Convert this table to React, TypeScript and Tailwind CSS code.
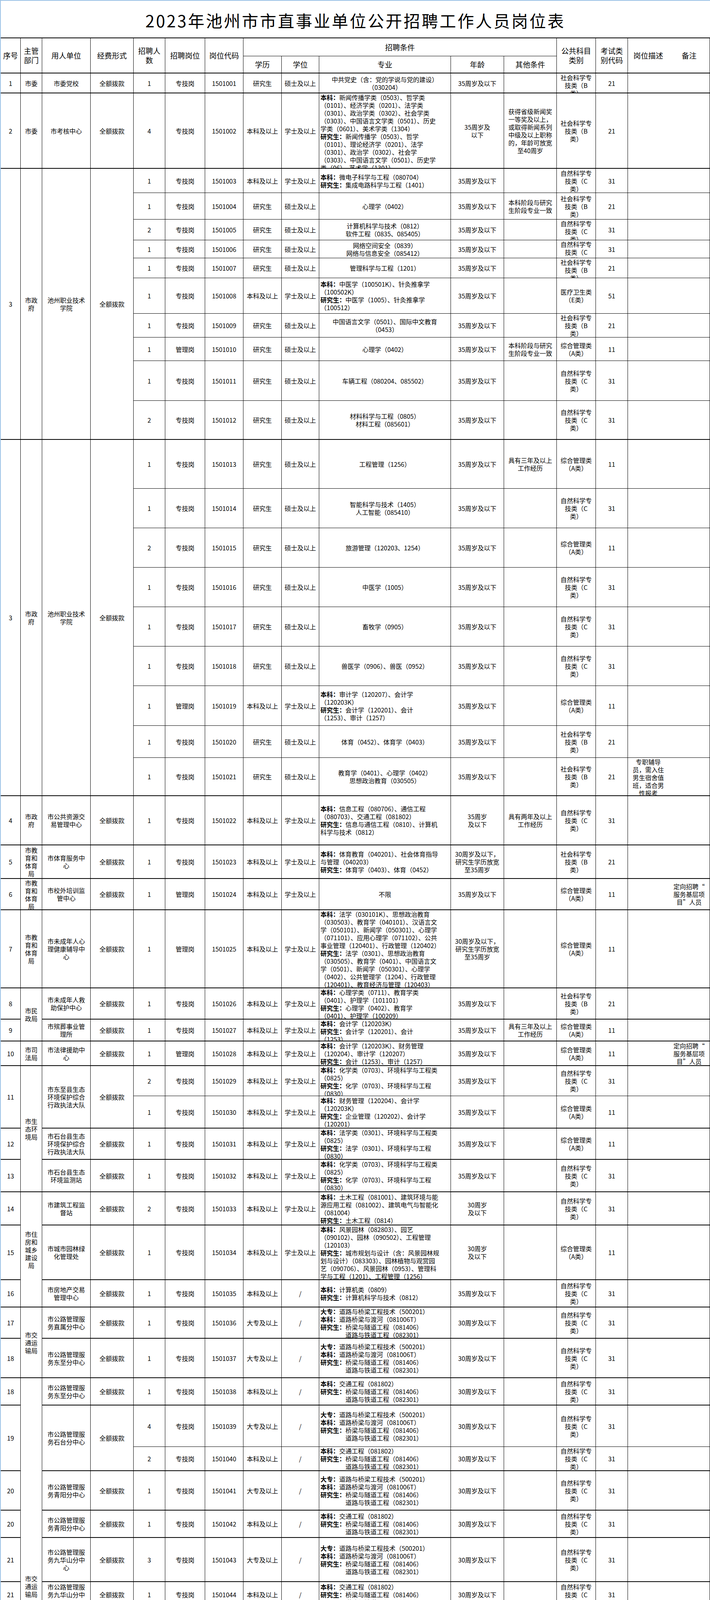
import React from 'react';

const Y = [188,239,432,494,562,615,661,712,803,864,924,1026,1126,1251,1352,1453,1554,1655,1756,1858,1940,2038,2164,2250,2330,2530,2610,2666,2729,2806,2889,2969,3052,3137,3277,3347,3427,3528,3598,3704,3766,3867,3937,4050,4116,4217,4322,4393,4443,4519,4595,4764,4895,5045,5153,5254,5320,5440,5536,5622,5725,5786,5881,5939,6022,6134,6195,6286,6367,6493,6554,6605];

const Z = '专技岗', G = '管理岗', BK = '本科及以上', YJ = '研究生', SS = '硕士及以上', XS = '学士及以上', DZ = '大专及以上', ZK = '专科及以上', SL = '/';
const A35 = '35周岁及以下', A30 = '30周岁及以下';
const CA = '综合管理类\n（A类）', CB = '社会科学专\n技类（B\n类）', CC = '自然科学专\n技类（C\n类）', CE = '医疗卫生类\n（E类）';
const QE = '全额拨款';
const ZF = '市政\n府';
const ZYJ = '池州职业技术\n学院';
const JT = '市交\n通运\n输局';
const JYT = '市教\n育和\n体育\n局';
const DX = '定向招聘“\n服务基层项\n目”人员';
const JS = '定向招聘驻\n池部队随军\n家属';
const SM = '40周岁及以下，\n符合池招\n（2019）16号文\n件规定的特殊情\n况，年龄放宽至\n45周岁';
const HAI = '市地方海事\n（港航）管理\n';

const DQ = ['大专：道路与桥梁工程技术（500201）', '本科：道路桥梁与渡河（081006T）', '研究生：桥梁与隧道工程（081406）', '^道路与铁道工程（082301）'];
const BQ = ['本科：交通工程（081802）', '研究生：桥梁与隧道工程（081406）', '^道路与铁道工程（082301）'];

type Row = {
  xu?: [string, number];
  dept?: [string, number];
  unit?: [string, number];
  fund?: [string, number];
  n: string; p: string; code: string; e: string; d: string;
  m: string[]; mc?: boolean;
  a: string; o?: string; cat: string; cc: string; desc?: string; note?: string; noteL?: boolean;
};

const rows: Row[] = [
  { xu: ['1', 1], dept: ['市委', 1], unit: ['市委党校', 1], fund: [QE, 1], n: '1', p: Z, code: '1501001', e: YJ, d: SS, m: ['中共党史（含：党的学说与党的建设）', '（030204）'], mc: true, a: A35, cat: CB, cc: '21' },
  { xu: ['2', 1], dept: ['市委', 1], unit: ['市考核中心', 1], fund: [QE, 1], n: '4', p: Z, code: '1501002', e: BK, d: XS, m: ['本科：新闻传播学类（0503）、哲学类', '（0101）、经济学类（0201）、法学类', '（0301）、政治学类（0302）、社会学类', '（0303）、中国语言文学类（0501）、历史', '学类（0601）、美术学类（1304）', '研究生：新闻传播学（0503）、哲学', '（0101）、理论经济学（0201）、法学', '（0301）、政治学（0302）、社会学', '（0303）、中国语言文学（0501）、历史学', '类（06）、艺术学（1301）'], a: '35周岁及\n以下', o: '获得省级新闻奖\n一等奖及以上，\n或取得新闻系列\n中级及以上职称\n的，年龄可放宽\n至40周岁', cat: CB, cc: '21' },
  { xu: ['3', 10], dept: [ZF, 10], unit: [ZYJ, 10], fund: [QE, 10], n: '1', p: Z, code: '1501003', e: BK, d: XS, m: ['本科：微电子科学与工程（080704）', '研究生：集成电路科学与工程（1401）'], a: A35, cat: CC, cc: '31' },
  { n: '1', p: Z, code: '1501004', e: YJ, d: SS, m: ['心理学（0402）'], mc: true, a: A35, o: '本科阶段与研究\n生阶段专业一致', cat: CB, cc: '21' },
  { n: '2', p: Z, code: '1501005', e: YJ, d: SS, m: ['计算机科学与技术（0812）', '软件工程（0835、085405）'], mc: true, a: A35, cat: CC, cc: '31' },
  { n: '1', p: Z, code: '1501006', e: YJ, d: SS, m: ['网络空间安全（0839）', '网络与信息安全（085412）'], mc: true, a: A35, cat: CC, cc: '31' },
  { n: '1', p: Z, code: '1501007', e: YJ, d: SS, m: ['管理科学与工程（1201）'], mc: true, a: A35, cat: CB, cc: '21' },
  { n: '1', p: Z, code: '1501008', e: BK, d: XS, m: ['本科：中医学（100501K）、针灸推拿学', '（100502K）', '研究生：中医学（1005）、针灸推拿学', '（100512）'], a: A35, cat: CE, cc: '51' },
  { n: '1', p: Z, code: '1501009', e: YJ, d: SS, m: ['中国语言文学（0501）、国际中文教育', '（0453）'], mc: true, a: A35, cat: CB, cc: '21' },
  { n: '1', p: G, code: '1501010', e: YJ, d: SS, m: ['心理学（0402）'], mc: true, a: A35, o: '本科阶段与研究\n生阶段专业一致', cat: CA, cc: '11' },
  { n: '1', p: Z, code: '1501011', e: YJ, d: SS, m: ['车辆工程（080204、085502）'], mc: true, a: A35, cat: CC, cc: '31' },
  { n: '2', p: Z, code: '1501012', e: YJ, d: SS, m: ['材料科学与工程（0805）', '材料工程（085601）'], mc: true, a: A35, cat: CC, cc: '31' },
  { xu: ['3', 9], dept: [ZF, 9], unit: [ZYJ, 9], fund: [QE, 9], n: '1', p: Z, code: '1501013', e: YJ, d: SS, m: ['工程管理（1256）'], mc: true, a: A35, o: '具有三年及以上\n工作经历', cat: CA, cc: '11' },
  { n: '1', p: Z, code: '1501014', e: YJ, d: SS, m: ['智能科学与技术（1405）', '人工智能（085410）'], mc: true, a: A35, cat: CC, cc: '31' },
  { n: '2', p: Z, code: '1501015', e: YJ, d: SS, m: ['旅游管理（120203、1254）'], mc: true, a: A35, cat: CA, cc: '11' },
  { n: '1', p: Z, code: '1501016', e: YJ, d: SS, m: ['中医学（1005）'], mc: true, a: A35, cat: CC, cc: '31' },
  { n: '1', p: Z, code: '1501017', e: YJ, d: SS, m: ['畜牧学（0905）'], mc: true, a: A35, cat: CC, cc: '31' },
  { n: '1', p: Z, code: '1501018', e: YJ, d: SS, m: ['兽医学（0906）、兽医（0952）'], mc: true, a: A35, cat: CC, cc: '31' },
  { n: '1', p: G, code: '1501019', e: BK, d: XS, m: ['本科：审计学（120207）、会计学', '（120203K）', '研究生：会计学（120201）、会计', '（1253）、审计（1257）'], a: A35, cat: CA, cc: '11' },
  { n: '1', p: Z, code: '1501020', e: YJ, d: SS, m: ['体育（0452）、体育学（0403）'], mc: true, a: A35, cat: CB, cc: '21' },
  { n: '1', p: Z, code: '1501021', e: YJ, d: SS, m: ['教育学（0401）、心理学（0402）', '思想政治教育（030505）'], mc: true, a: A35, cat: CB, cc: '21', desc: '专职辅导\n员，需入住\n男生宿舍值\n班，适合男\n性报考' },
  { xu: ['4', 1], dept: [ZF, 1], unit: ['市公共资源交\n易管理中心', 1], fund: [QE, 1], n: '1', p: Z, code: '1501022', e: BK, d: XS, m: ['本科：信息工程（080706）、通信工程', '（080703）、交通工程（081802）', '研究生：信息与通信工程（0810）、计算机', '科学与技术（0812）'], a: '35周岁\n及以下', o: '具有两年及以上\n工作经历', cat: CC, cc: '31' },
  { xu: ['5', 1], dept: [JYT, 1], unit: ['市体育服务中\n心', 1], fund: [QE, 1], n: '1', p: Z, code: '1501023', e: BK, d: XS, m: ['本科：体育教育（040201）、社会体育指导', '与管理（040203）', '研究生：体育学（0403）、体育（0452）'], a: '30周岁及以下，\n研究生学历放宽\n至35周岁', cat: CB, cc: '21' },
  { xu: ['6', 1], dept: [JYT, 1], unit: ['市校外培训监\n管中心', 1], fund: [QE, 1], n: '1', p: G, code: '1501024', e: BK, d: XS, m: ['不限'], mc: true, a: A35, cat: CA, cc: '11', note: DX },
  { xu: ['7', 1], dept: [JYT, 1], unit: ['市未成年人心\n理健康辅导中\n心', 1], fund: [QE, 1], n: '1', p: G, code: '1501025', e: BK, d: XS, m: ['本科：法学（030101K）、思想政治教育', '（030503）、教育学（040101）、汉语言文', '学（050101）、新闻学（050301）、心理学', '（071101）、应用心理学（071102）、公共', '事业管理（120401）、行政管理（120402）', '研究生：法学（0301）、思想政治教育', '（030505）、教育学（0401）、中国语言文', '学（0501）、新闻学（050301）、心理学', '（0402）、公共管理学（1204）、行政管理', '（120401）、教育经济与管理（120403）'], a: '30周岁及以下，\n研究生学历放宽\n至35周岁', cat: CA, cc: '11' },
  { xu: ['8', 1], dept: ['市民\n政局', 2], unit: ['市未成年人救\n助保护中心', 1], fund: [QE, 1], n: '1', p: Z, code: '1501026', e: BK, d: XS, m: ['本科：心理学类（0711）、教育学类', '（0401）、护理学（101101）', '研究生：心理学（0402）、教育学', '（0401）、护理学（100209）'], a: A35, cat: CB, cc: '21' },
  { xu: ['9', 1], unit: ['市殡葬事业管\n理所', 1], fund: [QE, 1], n: '1', p: Z, code: '1501027', e: BK, d: XS, m: ['本科：会计学（120203K）', '研究生：会计学（120201）、会计', '（1253）'], a: A35, o: '具有三年及以上\n工作经历', cat: CA, cc: '11' },
  { xu: ['10', 1], dept: ['市司\n法局', 1], unit: ['市法律援助中\n心', 1], fund: [QE, 1], n: '1', p: G, code: '1501028', e: BK, d: XS, m: ['本科：会计学（120203K）、财务管理', '（120204）、审计学（120207）', '研究生：会计（1253）、审计（1257）'], a: A35, cat: CA, cc: '11', note: DX },
  { xu: ['11', 2], dept: ['市生\n态环\n境局', 4], unit: ['市东至县生态\n环境保护综合\n行政执法大队', 2], fund: [QE, 2], n: '2', p: Z, code: '1501029', e: BK, d: XS, m: ['本科：化学类（0703）、环境科学与工程类', '（0825）', '研究生：化学（0703）、环境科学与工程', '（0830）'], a: A35, cat: CC, cc: '31' },
  { n: '1', p: Z, code: '1501030', e: BK, d: XS, m: ['本科：财务管理（120204）、会计学', '（120203K）', '研究生：企业管理（120202）、会计学', '（120201）'], a: A35, cat: CA, cc: '11' },
  { xu: ['12', 1], unit: ['市石台县生态\n环境保护综合\n行政执法大队', 1], fund: [QE, 1], n: '1', p: Z, code: '1501031', e: BK, d: XS, m: ['本科：法学类（0301）、环境科学与工程类', '（0825）', '研究生：法学（0301）、环境科学与工程', '（0830）'], a: A35, cat: CA, cc: '11' },
  { xu: ['13', 1], unit: ['市石台县生态\n环境监测站', 1], fund: [QE, 1], n: '1', p: Z, code: '1501032', e: BK, d: XS, m: ['本科：化学类（0703）、环境科学与工程类', '（0825）', '研究生：化学（0703）、环境科学与工程', '（0830）'], a: A35, cat: CC, cc: '31' },
  { xu: ['14', 1], dept: ['市住\n房和\n城乡\n建设\n局', 3], unit: ['市建筑工程监\n督站', 1], fund: [QE, 1], n: '2', p: Z, code: '1501033', e: BK, d: XS, m: ['本科：土木工程（081001）、建筑环境与能', '源应用工程（081002）、建筑电气与智能化', '（081004）', '研究生：土木工程（0814）'], a: '30周岁\n及以下', cat: CC, cc: '31' },
  { xu: ['15', 1], unit: ['市城市园林绿\n化管理处', 1], fund: [QE, 1], n: '1', p: Z, code: '1501034', e: BK, d: XS, m: ['本科：风景园林（082803）、园艺', '（090102）、园林（090502）、工程管理', '（120103）', '研究生：城市规划与设计（含：风景园林规', '划与设计）（083303）、园林植物与观赏园', '艺（090706）、风景园林（0953）、管理科', '学与工程（1201）、工程管理（1256）'], a: '30周岁\n及以下', cat: CA, cc: '11' },
  { xu: ['16', 1], unit: ['市房地产交易\n管理中心', 1], fund: [QE, 1], n: '1', p: Z, code: '1501035', e: BK, d: SL, m: ['本科：计算机类（0809）', '研究生：计算机科学与技术（0812）'], a: A35, cat: CC, cc: '31' },
  { xu: ['17', 1], dept: [JT, 2], unit: ['市公路管理服\n务直属分中心', 1], fund: [QE, 1], n: '1', p: Z, code: '1501036', e: DZ, d: SL, m: DQ, a: A30, cat: CC, cc: '31' },
  { xu: ['18', 1], unit: ['市公路管理服\n务东至分中心', 1], fund: [QE, 1], n: '1', p: Z, code: '1501037', e: DZ, d: SL, m: DQ, a: A30, cat: CC, cc: '31' },
  { xu: ['18', 1], dept: [JT, 13], unit: ['市公路管理服\n务东至分中心', 1], fund: [QE, 1], n: '1', p: Z, code: '1501038', e: BK, d: SL, m: BQ, a: A30, cat: CC, cc: '31' },
  { xu: ['19', 2], unit: ['市公路管理服\n务石台分中心', 2], fund: [QE, 2], n: '4', p: Z, code: '1501039', e: DZ, d: SL, m: DQ, a: A30, cat: CC, cc: '31' },
  { n: '2', p: Z, code: '1501040', e: BK, d: SL, m: BQ, a: A30, cat: CC, cc: '31' },
  { xu: ['20', 1], unit: ['市公路管理服\n务青阳分中心', 1], fund: [QE, 1], n: '1', p: Z, code: '1501041', e: DZ, d: SL, m: DQ, a: A30, cat: CC, cc: '31' },
  { xu: ['20', 1], unit: ['市公路管理服\n务青阳分中心', 1], fund: [QE, 1], n: '1', p: Z, code: '1501042', e: BK, d: SL, m: BQ, a: A30, cat: CC, cc: '31' },
  { xu: ['21', 1], unit: ['市公路管理服\n务九华山分中\n心', 1], fund: [QE, 1], n: '3', p: Z, code: '1501043', e: DZ, d: SL, m: DQ, a: A30, cat: CC, cc: '31' },
  { xu: ['21', 1], unit: ['市公路管理服\n务九华山分中\n心', 1], fund: [QE, 1], n: '1', p: Z, code: '1501044', e: BK, d: SL, m: BQ, a: A30, cat: CC, cc: '31' },
  { xu: ['22', 6], unit: ['市道路运输管\n理服务中心', 6], fund: [QE, 6], n: '1', p: Z, code: '1501045', e: BK, d: XS, m: ['本科：会计学（120203K）、财务管理', '（120204）、审计学（120207）、财政学', '（020201K）', '研究生：会计学（120201）、会计', '（1253）、审计（1257）、财政学'], a: A35, cat: CA, cc: '11' },
  { n: '2', p: Z, code: '1501046', e: BK, d: XS, m: ['本科：交通运输（081801）、交通工程', '（081802）、机械电子工程（080204）', '研究生：交通运输（0861）、交通信息工', '程及控制（082302）'], a: A35, cat: CC, cc: '31' },
  { n: '2', p: G, code: '1501047', e: BK, d: XS, m: ['本科：交通管理（120407T）交通设备与控', '制工程（081806T）城乡规划（082802）', '研究生：交通运输规划与管理（082303）'], a: A35, cat: CA, cc: '11' },
  { n: '1', p: G, code: '1501048', e: BK, d: XS, m: ['不限'], mc: true, a: A35, cat: CA, cc: '11', note: '定向招聘退\n役士兵' },
  { n: '1', p: Z, code: '1501049', e: BK, d: XS, m: ['本科：安全工程（082901）应急技术与管理', '（082902T）应急管理（120111T）', '研究生：安全技术及工程（081903）'], a: A35, cat: CC, cc: '31' },
  { n: '1', p: G, code: '1501050', e: BK, d: XS, m: ['本科：物流管理（120601）物流工程', '（120602）工业工程（120701）', '研究生：管理科学与工程（1201）'], a: A35, cat: CA, cc: '11' },
  { xu: ['23', 1], dept: [JT, 4], unit: [HAI + '服务中心', 1], fund: [QE, 1], n: '1', p: Z, code: '1501051', e: BK, d: XS, m: ['本科：交通工程（081802）、船舶与海洋工', '程（081901）、海事管理（120408T）、港', '口航道与海岸工程（081103）', '研究生：交通运输工程（0823）、船舶与海', '洋工程（0824）、港口、海岸及近海工程', '（081505）'], a: A35, cat: CC, cc: '31' },
  { xu: ['24', 1], unit: [HAI + '服务中心青阳\n站', 1], fund: [QE, 1], n: '1', p: G, code: '1501052', e: ZK, d: SL, m: ['专科：水路运输安全管理（500305）、港口', '与航道工程技术（500302）', '本科：交通工程（081802）、船舶与海洋工', '程（081901）、海事管理（120408T）', '研究生：交通运输工程（0823）、船舶与海', '洋工程（0824）'], a: A35, cat: CA, cc: '11' },
  { xu: ['25', 1], unit: [HAI + '服务中心东至\n站', 1], fund: [QE, 1], n: '3', p: G, code: '1501053', e: ZK, d: SL, m: ['专科：水路运输安全管理（500305）、港口', '与航道工程技术（500302）', '本科：交通工程（081802）、船舶与海洋工', '程（081901）、海事管理（120408T）、安', '全工程（082901）', '研究生：交通运输工程（0823）、船舶与海', '洋工程（0824）'], a: A35, cat: CA, cc: '11' },
  { xu: ['26', 1], unit: [HAI + '服务中心牛头\n山所', 1], fund: [QE, 1], n: '2', p: G, code: '1501054', e: BK, d: XS, m: ['本科：海事管理（120408T）、机械电子工', '程（080204）、交通工程（081802）、船舶', '与海洋工程（081901）、安全工程', '（082901）', '研究生：交通运输工程（0823）、船舶与海', '洋工程（0824）、安全工程（085702）'], a: A35, cat: CA, cc: '11' },
  { xu: ['27', 1], dept: ['市卫\n健委', 2], unit: ['市疾病预防控\n制保健中心', 1], fund: [QE, 1], n: '1', p: Z, code: '1501055', e: BK, d: XS, m: ['本科：预防医学（100401K）', '研究生：流行病与卫生统计学（100401）、', '劳动卫生与环境卫生学（100402）、营养与', '食品卫生学（100403）'], a: '25周岁及以下，\n硕士研究生年龄\n放宽至30周岁', cat: CE, cc: '56' },
  { xu: ['28', 1], unit: ['市紧急救援中\n心', 1], fund: [QE, 1], n: '1', p: G, code: '1501056', e: BK, d: XS, m: ['本科：临床医学（100201K）', '研究生：临床医学（1002）'], a: A35, cat: CA, cc: '11' },
  { xu: ['29', 1], dept: ['市退\n役军\n人事\n务局', 2], unit: ['市军队离退休\n干部管理服务\n中心', 1], fund: [QE, 1], n: '1', p: G, code: '1501057', e: BK, d: SL, m: ['不限'], mc: true, a: SM, cat: CA, cc: '11', note: JS, noteL: true },
  { xu: ['30', 1], unit: ['池州烈士陵园\n管理处', 1], fund: [QE, 1], n: '1', p: Z, code: '1501058', e: BK, d: XS, m: ['本科：广播电视学（050302）、中国共产党', '历史（030503）、历史学（060101）', '研究生：新闻传播学（0503）、中共党史', '（030204）、中国史（0602）'], a: A30, cat: CB, cc: '11' },
  { xu: ['31', 1], dept: ['市林\n业局', 3], unit: ['安徽升金湖国\n家级自然保护\n区管理处执法\n巡查大队', 1], fund: [QE, 1], n: '1', p: G, code: '1501059', e: BK, d: SL, m: ['不限'], mc: true, a: A35, cat: CA, cc: '11' },
  { xu: ['31', 2], unit: ['安徽升金湖国\n家级自然保护\n区管理处执法\n巡查大队', 2], fund: [QE, 2], n: '1', p: G, code: '1501060', e: BK, d: SL, m: ['不限'], mc: true, a: SM, cat: CA, cc: '11', note: JS },
  { n: '1', p: Z, code: '1501061', e: BK, d: XS, m: ['本科：林学类（0905）', '研究生：林业（0954）'], a: A35, cat: CC, cc: '31' },
  { xu: ['32', 1], dept: ['市林\n业局', 1], unit: ['安徽升金湖国\n家级自然保护\n区管理处科研\n救护中心', 1], fund: [QE, 1], n: '1', p: G, code: '1501062', e: BK, d: SL, m: ['不限'], mc: true, a: A35, cat: CA, cc: '11' },
  { xu: ['33', 1], dept: ['市医\n疗保\n障局', 1], unit: ['市医疗保障基\n金监管中心', 1], fund: [QE, 1], n: '1', p: G, code: '1501063', e: BK, d: XS, m: ['本科：法学（030101K）', '研究生：法学类（03）'], a: A30, cat: CA, cc: '11' },
  { xu: ['34', 1], dept: ['市机\n关事\n务管\n理局', 1], unit: ['市直机关服务\n中心', 1], fund: [QE, 1], n: '1', p: Z, code: '1501064', e: BK, d: XS, m: ['本科：会计学（120203K）、财务管理', '（120204）', '研究生：会计学（120201）、会计', '（1253）'], a: A30, cat: CA, cc: '11' },
  { xu: ['35', 1], dept: ['市残\n疾人\n联合\n会', 1], unit: ['市残疾人康复\n和辅具中心', 1], fund: [QE, 1], n: '1', p: Z, code: '1501065', e: BK, d: XS, m: ['本科：人力资源管理（120206），汉语言文', '学（050101），数学与应用数学', '（070101），康复治疗学（101005），护理', '学（101101）', '研究生：护理学（1011）'], a: A35, cat: CA, cc: '11' },
  { xu: ['36', 1], dept: ['市总\n工会', 1], unit: ['市职工服务中\n心', 1], fund: [QE, 1], n: '1', p: G, code: '1501066', e: BK, d: SL, m: ['不限'], mc: true, a: A35, cat: CA, cc: '11' },
  { xu: ['37', 1], dept: ['九华\n山风\n景区\n管委\n会', 4], unit: ['九华山风景区\n机关事务保障\n中心', 1], fund: [QE, 1], n: '1', p: G, code: '1501067', e: BK, d: XS, m: ['本科：法学类（0301）；管理学门类（12）', '研究生：法学类（03）；管理学类（12）'], a: A35, cat: CA, cc: '11' },
  { xu: ['38', 2], unit: ['九华山风景区\n投资促进中心', 2], fund: [QE, 2], n: '1', p: G, code: '1501068', e: BK, d: XS, m: ['本科：艺术学门类（13）；中国语言文学类', '（0501）', '研究生：中国语言文学（0501）'], a: A35, cat: CA, cc: '11' },
  { n: '2', p: G, code: '1501069', e: BK, d: XS, m: ['本科：经济学门类（02）；管理学门类', '（12）；建筑类（0828）；', '研究生：经济学类（02）；管理学类', '（12）；建筑学（0813）'], a: A35, cat: CA, cc: '11' },
  { xu: ['39', 1], unit: ['九华山风景区\n应急管理综合\n行政执法大队', 1], fund: [QE, 1], n: '2', p: G, code: '1501070', e: BK, d: XS, m: ['不限'], mc: true, a: A35, cat: CA, cc: '11' },
];

function Cell({ r, rs = 1, c, cs = 1, thick, noR, left, head, children }: { r: number; rs?: number; c: number; cs?: number; thick?: boolean; noR?: boolean; left?: boolean; head?: boolean; children?: React.ReactNode }) {
  return (
    <div
      style={{ gridRow: `${r} / span ${rs}`, gridColumn: `${c} / span ${cs}` }}
      className={`min-h-0 overflow-hidden flex flex-col [justify-content:safe_center] whitespace-pre-line border-black ${left ? 'items-start text-left pl-[3px]' : 'items-center text-center px-[2px]'} ${thick ? 'border-b-2' : 'border-b'} ${noR ? '' : 'border-r'} ${head ? 'text-[19px] leading-[24px]' : 'text-[16px] leading-[20px]'}`}
    >
      {children}
    </div>
  );
}

function Major({ lines }: { lines: string[] }) {
  return (
    <>
      {lines.map((raw, i) => {
        let ln = raw;
        const indent = ln.startsWith('^');
        if (indent) ln = ln.slice(1);
        const m = ln.match(/^(本科：|研究生：|大专：|专科：)(.*)$/);
        return (
          <div key={i} className={indent ? 'whitespace-nowrap pl-[64px]' : 'whitespace-nowrap'}>
            {m ? (
              <>
                <span className="font-bold">{m[1]}</span>
                {m[2]}
              </>
            ) : (
              ln
            )}
          </div>
        );
      })}
    </>
  );
}

export default function App() {
  const heights: number[] = [];
  for (let i = 0; i < Y.length - 1; i++) heights.push(Y[i + 1] - Y[i]);
  const template = ['46px', '44px', ...heights.map((h) => `${h}px`)].join(' ');
  const n = rows.length;
  const groupEnd = (j: number) => j >= n - 1 || rows[j + 1].xu !== undefined;

  const cells: React.ReactNode[] = [];
  rows.forEach((row, i) => {
    const gr = i + 3;
    const span = (s: [string, number] | undefined, c: number, key: string) => {
      if (!s) return;
      const end = i + s[1] - 1;
      cells.push(
        <Cell key={key + i} r={gr} rs={s[1]} c={c} thick={groupEnd(end)}>
          {s[0]}
        </Cell>
      );
    };
    span(row.xu, 1, 'xu');
    span(row.dept, 2, 'dp');
    span(row.unit, 3, 'un');
    span(row.fund, 4, 'fd');
    const t = groupEnd(i);
    cells.push(<Cell key={'n' + i} r={gr} c={5} thick={t}>{row.n}</Cell>);
    cells.push(<Cell key={'p' + i} r={gr} c={6} thick={t}>{row.p}</Cell>);
    cells.push(<Cell key={'cd' + i} r={gr} c={7} thick={t}>{row.code}</Cell>);
    cells.push(<Cell key={'e' + i} r={gr} c={8} thick={t}>{row.e}</Cell>);
    cells.push(<Cell key={'d' + i} r={gr} c={9} thick={t}>{row.d}</Cell>);
    cells.push(
      <Cell key={'m' + i} r={gr} c={10} thick={t} left={!row.mc}>
        <Major lines={row.m} />
      </Cell>
    );
    cells.push(<Cell key={'a' + i} r={gr} c={11} thick={t}>{row.a}</Cell>);
    cells.push(<Cell key={'o' + i} r={gr} c={12} thick={t}>{row.o ?? ''}</Cell>);
    cells.push(<Cell key={'ct' + i} r={gr} c={13} thick={t}>{row.cat}</Cell>);
    cells.push(<Cell key={'cc' + i} r={gr} c={14} thick={t}>{row.cc}</Cell>);
    cells.push(<Cell key={'ds' + i} r={gr} c={15} thick={t} noR>{row.desc ?? ''}</Cell>);
    cells.push(<Cell key={'nt' + i} r={gr} c={16} thick={t} left={row.noteL}>{row.note ?? ''}</Cell>);
  });

  const tr = n + 3;
  for (let c = 1; c <= 16; c++) {
    cells.push(
      <Cell key={'tot' + c} r={tr} c={c} noR={c === 15}>
        {c === 1 ? '总计' : c === 5 ? '91' : ''}
      </Cell>
    );
  }

  return (
    <div className="w-[1817px] h-[6605px] overflow-hidden bg-white text-black border-l-2 border-t-2 border-[#9dc3e6] font-['Noto_Sans_CJK_SC',sans-serif]">
      <div className="h-[96px] flex items-center justify-center border-b-2 border-black">
        <h1 className="text-[42px] tracking-[4px] leading-none font-normal pt-[6px]">2023年池州市市直事业单位公开招聘工作人员岗位表</h1>
      </div>
      <div
        className="grid grid-cols-[51px_55px_124px_110px_81px_102px_98px_98px_96px_337px_136px_135px_100px_82px_104px_106px]"
        style={{ gridTemplateRows: template }}
      >
        <Cell head r={1} rs={2} c={1} thick>序号</Cell>
        <Cell head r={1} rs={2} c={2} thick>{'主管\n部门'}</Cell>
        <Cell head r={1} rs={2} c={3} thick>用人单位</Cell>
        <Cell head r={1} rs={2} c={4} thick>经费形式</Cell>
        <Cell head r={1} rs={2} c={5} thick>{'招聘人\n数'}</Cell>
        <Cell head r={1} rs={2} c={6} thick>招聘岗位</Cell>
        <Cell head r={1} rs={2} c={7} thick>岗位代码</Cell>
        <Cell head r={1} c={8} cs={5}>招聘条件</Cell>
        <Cell head r={2} c={8} thick>学历</Cell>
        <Cell head r={2} c={9} thick>学位</Cell>
        <Cell head r={2} c={10} thick>专业</Cell>
        <Cell head r={2} c={11} thick>年龄</Cell>
        <Cell head r={2} c={12} thick>其他条件</Cell>
        <Cell head r={1} rs={2} c={13} thick>{'公共科目\n类别'}</Cell>
        <Cell head r={1} rs={2} c={14} thick>{'考试类\n别代码'}</Cell>
        <Cell head r={1} rs={2} c={15} thick noR>岗位描述</Cell>
        <Cell head r={1} rs={2} c={16} thick>备注</Cell>
        {cells}
      </div>
    </div>
  );
}
